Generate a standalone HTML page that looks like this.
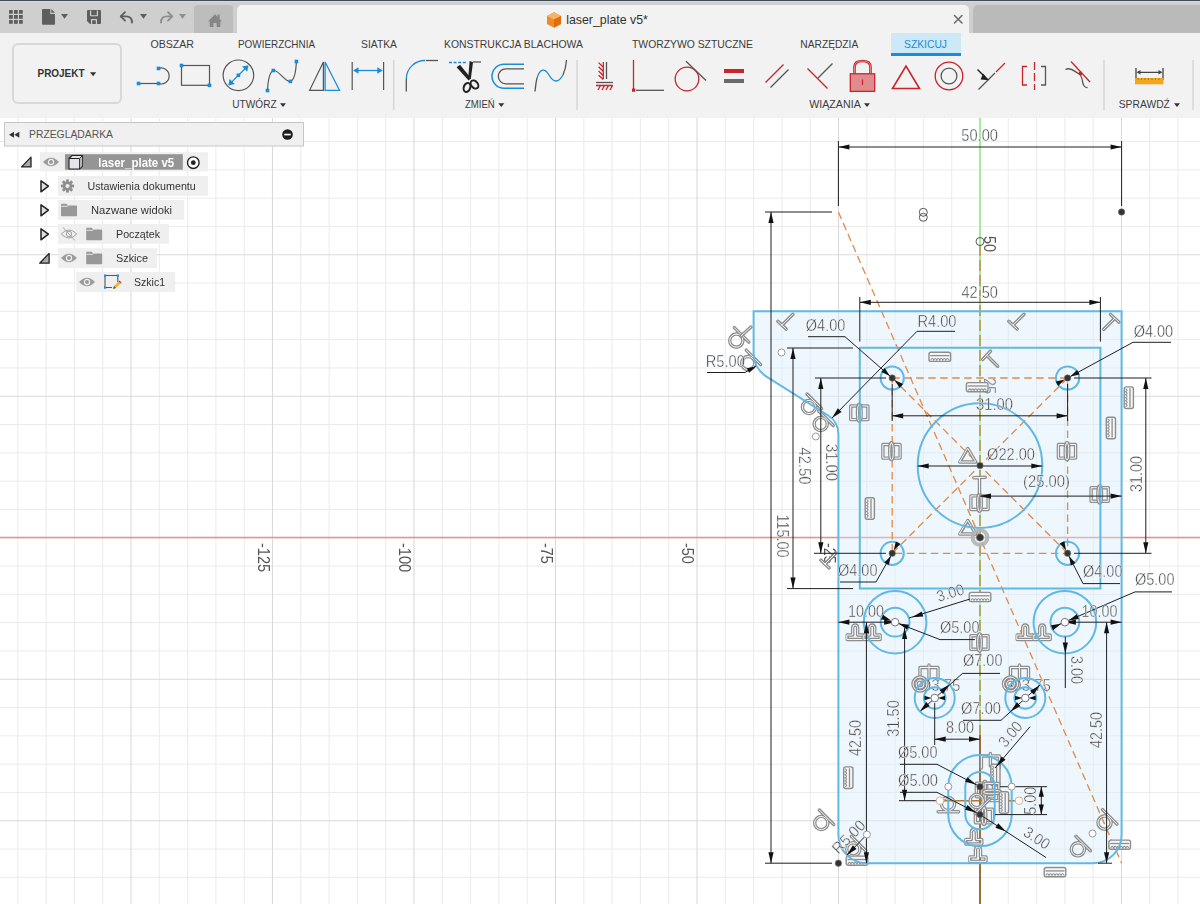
<!DOCTYPE html>
<html><head><meta charset="utf-8">
<style>
*{margin:0;padding:0;box-sizing:border-box}
html,body{width:1200px;height:904px;overflow:hidden;background:#fff;font-family:"Liberation Sans",sans-serif;position:relative}
.abs{position:absolute}
.tab{position:absolute;top:37px;font-size:10.4px;line-height:14px;color:#3c3c3c;white-space:nowrap}
.glabel{position:absolute;top:97px;font-size:10.4px;line-height:14px;color:#3c3c3c;white-space:nowrap}
.bt{position:absolute;font-size:11.5px;line-height:14px;color:#333;white-space:nowrap}
.rowbg{position:absolute;background:#ececec}
</style></head><body>
<div class="abs" style="left:0;top:0;width:1200px;height:118px;background:#f2f2f2"></div>
<div class="abs" style="left:0;top:0;width:1200px;height:33px;background:#cfcfcf"></div>
<div class="abs" style="left:0;top:0;width:1200px;height:1px;background:#3f4a5c"></div>
<div class="abs" style="left:0;top:1px;width:1200px;height:1px;background:#d9d9d9"></div>
<div class="abs" style="left:194px;top:5px;width:39px;height:28px;background:#bdbdbd;border-radius:4px 4px 0 0"></div>
<div class="abs" style="left:237px;top:5px;width:732px;height:28px;background:#f2f2f2;border-radius:5px 5px 0 0"></div>
<div class="abs" style="left:973px;top:5px;width:227px;height:28px;background:#bababa;border-radius:5px 0 0 0"></div>
<div class="abs" style="left:11.5px;top:43px;width:110px;height:61px;border:2px solid #d8d8d8;border-radius:6px"></div>
<div class="abs" style="left:891px;top:33px;width:70px;height:23px;background:#cde8f7;border-bottom:3px solid #1a8cd8"></div>
<svg class="abs" style="left:0;top:0" width="1200" height="118" viewBox="0 0 1200 118">
<g fill="#5e5e5e">
<rect x="9" y="10" width="3.8" height="3.8" rx="0.6"/><rect x="14" y="10" width="3.8" height="3.8"/><rect x="19" y="10" width="3.8" height="3.8" rx="0.6"/>
<rect x="9" y="15" width="3.8" height="3.8"/><rect x="14" y="15" width="3.8" height="3.8"/><rect x="19" y="15" width="3.8" height="3.8"/>
<rect x="9" y="20" width="3.8" height="3.8" rx="0.6"/><rect x="14" y="20" width="3.8" height="3.8"/><rect x="19" y="20" width="3.8" height="3.8" rx="0.6"/>
<path d="M42 9.8Q42 9 42.8 9H50.3V14H55V24Q55 24.8 54.2 24.8H42.8Q42 24.8 42 24Z"/>
<path d="M51.3 9L55 12.8H51.3Z"/>
<path d="M61 14H68L64.5 18.8Z"/>
<path d="M87 11Q87 10 88 10H100Q101 10 101 11V23Q101 24 100 24H90L87 21Z M90 10.6V15.5Q90 16.3 90.8 16.3H97.2Q98 16.3 98 15.5V10.6H96.8V15.2H91.2V10.6Z M91 24V19.8Q91 19 91.8 19H96.2Q97 19 97 19.8V24H95.8V20.2H92.2V24Z" fill-rule="evenodd"/>
<path d="M140 14H147L143.5 18.8Z"/>
</g>
<g fill="none" stroke="#5e5e5e" stroke-width="1.9" stroke-linecap="round" stroke-linejoin="round">
<path d="M125 12.2L120.8 16.4L125 20.6"/><path d="M121 16.4H126Q132 16.4 132 22.6"/>
</g>
<g fill="none" stroke="#8e8e8e" stroke-width="1.9" stroke-linecap="round" stroke-linejoin="round">
<path d="M168 12.2L172.2 16.4L168 20.6"/><path d="M172 16.4H167Q161 16.4 161 22.6"/>
</g>
<path d="M179 14H186L182.5 18.8Z" fill="#8e8e8e"/>
<path d="M208 21.3L215 14.3L217.6 16.9V14.6H219.6V18.9L222 21.3H220.3V27H216.6V23H213.4V27H209.7V21.3Z" fill="#868686"/>
<g stroke="#6a6a6a" stroke-width="1.5" stroke-linecap="round"><path d="M954.5 15.5L962 23M962 15.5L954.5 23"/></g>
<!-- cube icon title -->
<g transform="translate(546,12)">
<path d="M8 0.3L15 3.9V12L8 15.7L1 12V3.9Z" fill="#f08a24"/>
<path d="M8 0.3L15 3.9L8 7.6L1 3.9Z" fill="#f7b26a"/>
<path d="M8 7.6L15 3.9V12L8 15.7Z" fill="#e06d10"/>
</g>
<text x="566.2" y="24" font-size="12.6" fill="#333" textLength="81.7" lengthAdjust="spacingAndGlyphs">laser_plate v5*</text>
<g font-size="10.4" fill="#3c3c3c">
<text x="150.4" y="48" textLength="43.6" lengthAdjust="spacingAndGlyphs">OBSZAR</text>
<text x="238" y="48" textLength="77" lengthAdjust="spacingAndGlyphs">POWIERZCHNIA</text>
<text x="361" y="48" textLength="36" lengthAdjust="spacingAndGlyphs">SIATKA</text>
<text x="444" y="48" textLength="139" lengthAdjust="spacingAndGlyphs">KONSTRUKCJA BLACHOWA</text>
<text x="632" y="48" textLength="121" lengthAdjust="spacingAndGlyphs">TWORZYWO SZTUCZNE</text>
<text x="800.3" y="48" textLength="58" lengthAdjust="spacingAndGlyphs">NARZĘDZIA</text>
<text x="904" y="48" fill="#1a8cd8" textLength="43" lengthAdjust="spacingAndGlyphs">SZKICUJ</text>
<text x="232.3" y="108" textLength="44.3" lengthAdjust="spacingAndGlyphs">UTWÓRZ</text>
<text x="465" y="108" textLength="29.7" lengthAdjust="spacingAndGlyphs">ZMIEŃ</text>
<text x="809.2" y="108" textLength="51.6" lengthAdjust="spacingAndGlyphs">WIĄZANIA</text>
<text x="1118.7" y="108" textLength="51.2" lengthAdjust="spacingAndGlyphs">SPRAWDŹ</text>
</g>
<text x="37.5" y="77" font-size="10.8" font-weight="bold" fill="#333" textLength="47" lengthAdjust="spacingAndGlyphs">PROJEKT</text>
<g fill="#333"><path d="M90 72.3H96.2L93.1 76.3Z"/><path d="M280 103.3H286L283 107Z"/><path d="M498.3 103.3H504.3L501.3 107Z"/><path d="M864 103.3H870L867 107Z"/><path d="M1174 103.3H1180L1177 107Z"/></g>
<!-- separators -->
<g stroke="#d6d6d6" stroke-width="1.5"><path d="M393.7 60V110M577 60V110M1104 60V110M1193 60V110"/></g>
<!-- UTWORZ icons -->
<g fill="none" stroke="#555" stroke-width="1.2">
<path d="M138.5 83.5H158.5"/><path d="M158.5 68.4A8 8 0 1 1 158.5 83.5"/>
<rect x="181.5" y="65.5" width="28" height="19.8"/>
<circle cx="238.4" cy="75.3" r="15.3"/>
<path d="M267.5 90.5C268 80 270 72 273.3 70.5C279 70 285 82 290.4 81.4C295 80 296 70 296.4 61.5"/>
<path d="M323.4 62V90.3H309.6Z"/>
<path d="M352.2 62V90M383.6 62V90"/>
</g>
<g fill="#1a8cd8">
<rect x="136.7" y="81.7" width="3.6" height="3.6"/><rect x="156.7" y="81.7" width="3.6" height="3.6"/><rect x="156.7" y="66.6" width="3.6" height="3.6"/>
<rect x="179.7" y="63.7" width="3.6" height="3.6"/><rect x="207.7" y="83.5" width="3.6" height="3.6"/>
<rect x="236.6" y="73.5" width="3.6" height="3.6"/>
<rect x="265.7" y="88.7" width="3.6" height="3.6"/><rect x="271.5" y="68.7" width="3.6" height="3.6"/><rect x="288.6" y="79.6" width="3.6" height="3.6"/><rect x="294.6" y="59.7" width="3.6" height="3.6"/>
<path d="M248.5 65.2L242 66.5L247.2 71.7Z"/><path d="M228.3 85.4L234.8 84.1L229.6 78.9Z"/>
<path d="M353 70.5L358.5 67.2V73.8Z"/><path d="M382.8 70.5L377.3 67.2V73.8Z"/>
</g>
<g fill="none" stroke="#1a8cd8" stroke-width="1.3">
<path d="M245 68.7L231.8 81.9"/>
<path d="M325.1 62V90.3H339.5Z"/>
<path d="M357 70.5H379"/>
</g>
<!-- ZMIEN icons -->
<g fill="none" stroke-width="1.3">
<path d="M406.3 79V91.5" stroke="#555"/>
<path d="M406.3 79A18.5 18.5 0 0 1 425 60.5" stroke="#1a8cd8"/>
<path d="M426 60.5H438" stroke="#555"/>
<path d="M449 62.5H466" stroke="#1a8cd8" stroke-dasharray="3 1.6"/>
<path d="M473 62H481" stroke="#555"/>
<path d="M524 64.3H504A12 12 0 0 0 504 88.3H524" stroke="#1a8cd8" stroke-width="1.5"/>
<path d="M524 68.8H505.8A7.5 7.5 0 0 0 505.8 83.8H524" stroke="#555"/>
<path d="M535 91.5Q536 82 537 78" stroke="#555"/>
<path d="M537 78C540 68 545 68 549 75C553 82 558 84 563 75" stroke="#1a8cd8"/>
<path d="M563 75Q566 68 566.5 60" stroke="#555"/>
</g>
<g fill="#222">
<path d="M456.6 67.2L460 64.8L471 78.2L468.6 80.6Z"/>
<path d="M469.6 61L473 62.2L470.8 79L468.2 78.4Z"/>
<ellipse cx="467" cy="87.5" rx="3.2" ry="4.6" fill="none" stroke="#222" stroke-width="2" transform="rotate(20 467 87.5)"/>
<ellipse cx="474.5" cy="84.5" rx="3.2" ry="4.6" fill="none" stroke="#222" stroke-width="2" transform="rotate(-40 474.5 84.5)"/>
</g>
<!-- WIAZANIA icons -->
<g fill="none" stroke-width="1.3">
<path d="M606.5 62V79" stroke="#555"/>
<path d="M603.3 62V79M598.6 62.6L603.3 67.3M598.6 66.8L603.3 71.5M598.6 71L603.3 75.7M598.6 75.2L603.3 79.4" stroke="#c8242a"/>
<path d="M596 82.5H613" stroke="#555"/>
<path d="M596 85.5H613M598 90L600.5 85.5M602 90L604.5 85.5M606 90L608.5 85.5M610 90L612.5 85.5" stroke="#c8242a"/>
<path d="M633.5 60V89" stroke="#c8242a"/>
<path d="M636 90.3H664" stroke="#555"/>
<circle cx="687" cy="79" r="11.8" stroke="#c8242a"/>
<path d="M686 61.2L706 80.5" stroke="#555"/>
<path d="M765.5 82.5L783.5 64.5M807.5 68.5L827.5 88.5" stroke="#c8242a"/>
<path d="M770.5 87.5L788.5 69.5M818 78L832.5 63.5" stroke="#555"/>
<path d="M892.5 88.5H919.5L906 66Z" stroke="#c8242a" stroke-width="1.6"/>
<circle cx="949" cy="76" r="13.8" stroke="#c8242a"/>
<circle cx="949" cy="76" r="7.9" stroke="#555"/>
<path d="M978.5 89.5L995 73" stroke="#555"/>
<path d="M996 72L1005 63" stroke="#c8242a"/>
<path d="M977.5 69.5L984.5 76.5" stroke="#222" stroke-width="1.4"/>
<path d="M1027 66.5H1022.5V85H1027" stroke="#c8242a"/>
<path d="M1041 66.5H1045.5V85H1041" stroke="#555"/>
<path d="M1034.5 62V90" stroke="#c8242a" stroke-dasharray="8 3"/>
<path d="M1071 61.5L1090 82" stroke="#c8242a"/>
<path d="M1065.5 69.5C1071 66.5 1075 72 1078.5 73.5C1083 76 1082 82 1083.5 85Q1085 88 1087.5 87.5" stroke="#555"/>
<path d="M1136 68V80M1163 68V80M1138 72.3H1161" stroke="#444"/>
</g>
<g fill="#c8242a">
<rect x="632" y="88.5" width="3.3" height="3.3"/>
<rect x="724" y="69" width="20" height="4"/>
<rect x="1078.8" y="71.8" width="3.2" height="3.2"/>
</g>
<rect x="724" y="79" width="20" height="4" fill="#6a6a6a"/>
<g>
<path d="M854.5 73.5V67Q854.5 61 862.5 61Q870.5 61 870.5 67V73.5" fill="none" stroke="#c8242a" stroke-width="2.6"/>
<path d="M854.5 73.5V67Q854.5 61 862.5 61Q870.5 61 870.5 67V73.5" fill="none" stroke="#e08c8f" stroke-width="0.9"/>
<rect x="850.3" y="73.8" width="24.4" height="17.6" fill="#e08c8f" stroke="#c8242a" stroke-width="1.3"/>
<path d="M862.5 79.5V85" stroke="#c8242a" stroke-width="1.2"/>
</g>
<path d="M983 73.6L989.2 80.2L980.6 79.6Z" fill="#222"/>
<g fill="#444"><path d="M1136.5 72.3L1140.5 70V74.6Z"/><path d="M1162.5 72.3L1158.5 70V74.6Z"/></g>
<rect x="1135" y="78" width="28.5" height="6.3" fill="#f3a81c"/>
<path d="M1138 78V80M1141.5 78V80M1145 78V80M1148.5 78V80M1152 78V80M1155.5 78V80M1159 78V80" stroke="#a06a00" stroke-width="0.8"/>
</svg>
<svg class="abs" style="left:0;top:118px;will-change:transform" width="1200" height="786" viewBox="0 118 1200 786" shape-rendering="geometricPrecision">
<path d="M17.80 118V904M46.10 118V904M74.40 118V904M102.70 118V904M159.30 118V904M187.60 118V904M215.90 118V904M244.20 118V904M300.80 118V904M329.10 118V904M357.40 118V904M385.70 118V904M442.30 118V904M470.60 118V904M498.90 118V904M527.20 118V904M583.80 118V904M612.10 118V904M640.40 118V904M668.70 118V904M725.30 118V904M753.60 118V904M781.90 118V904M810.20 118V904M866.80 118V904M895.10 118V904M923.40 118V904M951.70 118V904M1008.30 118V904M1036.60 118V904M1064.90 118V904M1093.20 118V904M1149.80 118V904M1178.10 118V904M0 141.55H1200M0 169.85H1200M0 198.15H1200M0 226.45H1200M0 283.05H1200M0 311.35H1200M0 339.65H1200M0 367.95H1200M0 424.55H1200M0 452.85H1200M0 481.15H1200M0 509.45H1200M0 566.05H1200M0 594.35H1200M0 622.65H1200M0 650.95H1200M0 707.55H1200M0 735.85H1200M0 764.15H1200M0 792.45H1200M0 849.05H1200M0 877.35H1200" stroke="#ebebeb" stroke-width="1" fill="none"/>
<path d="M131.00 118V904M272.50 118V904M414.00 118V904M555.50 118V904M697.00 118V904M838.50 118V904M980.00 118V904M1121.50 118V904M0 254.75H1200M0 396.25H1200M0 537.75H1200M0 679.25H1200M0 820.75H1200" stroke="#dadada" stroke-width="1.1" fill="none"/>
<path d="M0 537.5H1200" stroke="#f08c8c" stroke-width="1.3"/>
<path d="M980 118V904" stroke="#a4eca4" stroke-width="2"/>
<text transform="translate(257.7 543) rotate(90)" font-size="16" fill="#555" textLength="29.2" lengthAdjust="spacingAndGlyphs">-125</text>
<text transform="translate(399.0 543) rotate(90)" font-size="16" fill="#555" textLength="29.2" lengthAdjust="spacingAndGlyphs">-100</text>
<text transform="translate(540.5 543) rotate(90)" font-size="16" fill="#555" textLength="20.8" lengthAdjust="spacingAndGlyphs">-75</text>
<text transform="translate(682.0 543) rotate(90)" font-size="16" fill="#555" textLength="20.8" lengthAdjust="spacingAndGlyphs">-50</text>
<text transform="translate(823.5 543) rotate(90)" font-size="16" fill="#555" textLength="20.8" lengthAdjust="spacingAndGlyphs">-25</text>
<text transform="translate(984 236) rotate(90)" font-size="16" fill="#555" textLength="16" lengthAdjust="spacingAndGlyphs">50</text>
<text transform="translate(984 378) rotate(90)" font-size="16" fill="#555" textLength="16" lengthAdjust="spacingAndGlyphs">25</text>
<path d="M753.6 311.3H1121.6V834.90A28.30 28.30 0 0 1 1093.30 863.2H866.70A28.30 28.30 0 0 1 838.4 834.90V434.40A22.64 22.64 0 0 0 827.82 415.24L766.82 376.82A28.30 28.30 0 0 1 753.6 352.88Z" fill="#d6ebfa" fill-opacity="0.42" stroke="none"/>
<path d="M838.40 212.00L1121.60 863.20" stroke="#e08a48" stroke-width="1.30" fill="none" stroke-dasharray="7.5 4.5"/>
<path d="M892.2 378H1067.6V553.3H892.2Z" stroke="#e08a48" stroke-width="1.3" fill="none" stroke-dasharray="7.5 4.5"/>
<path d="M892.20 378.00L1067.60 553.30" stroke="#e08a48" stroke-width="1.30" fill="none" stroke-dasharray="7.5 4.5"/>
<path d="M1067.60 378.00L892.20 553.30" stroke="#e08a48" stroke-width="1.30" fill="none" stroke-dasharray="7.5 4.5"/>
<path d="M980 245V735" stroke="#b4aa5c" stroke-width="2" fill="none" stroke-dasharray="11 4"/><path d="M980 735V904" stroke="#9a6e34" stroke-width="2" fill="none"/>
<path d="M940.00 800.70L1019.00 800.70" stroke="#b8742e" stroke-width="1.60" fill="none" />
<text x="919.50" y="690.50" font-size="15.7" fill="#555" stroke="#f6f9fc" stroke-width="0.4" text-anchor="start" textLength="41.0" lengthAdjust="spacingAndGlyphs">Ø3.75</text>
<text x="1010.00" y="690.50" font-size="15.7" fill="#555" stroke="#f6f9fc" stroke-width="0.4" text-anchor="start" textLength="41.0" lengthAdjust="spacingAndGlyphs">Ø3.75</text>
<g transform="translate(736.3 340.6) rotate(0)"><path d="M0 -6.6A6.6 6.6 0 1 1 0 6.6A6.6 6.6 0 1 1 0 -6.6M-2 -13L12.5 1.5" fill="none" stroke="#8d8d8d" stroke-width="3.4" stroke-linejoin="round" stroke-linecap="round" /><path d="M0 -6.6A6.6 6.6 0 1 1 0 6.6A6.6 6.6 0 1 1 0 -6.6M-2 -13L12.5 1.5" fill="none" stroke="#f7f9fb" stroke-width="1" stroke-linejoin="round" stroke-linecap="round"/></g>
<g transform="translate(743 335)"><path d="M-2 1L8 -8" fill="none" stroke="#8d8d8d" stroke-width="3.4" stroke-linejoin="round" stroke-linecap="round" /><path d="M-2 1L8 -8" fill="none" stroke="#f7f9fb" stroke-width="1" stroke-linejoin="round" stroke-linecap="round"/></g>
<g transform="translate(748.2 363.1) rotate(0)"><path d="M0 -6.6A6.6 6.6 0 1 1 0 6.6A6.6 6.6 0 1 1 0 -6.6M-2 -13L12.5 1.5" fill="none" stroke="#8d8d8d" stroke-width="3.4" stroke-linejoin="round" stroke-linecap="round" /><path d="M0 -6.6A6.6 6.6 0 1 1 0 6.6A6.6 6.6 0 1 1 0 -6.6M-2 -13L12.5 1.5" fill="none" stroke="#f7f9fb" stroke-width="1" stroke-linejoin="round" stroke-linecap="round"/></g>
<g transform="translate(782.0 325.2) rotate(0)"><path d="M-4.2 -3.9L4.2 3.9M0 0L11 -11" fill="none" stroke="#8d8d8d" stroke-width="3.4" stroke-linejoin="round" stroke-linecap="round" /><path d="M-4.2 -3.9L4.2 3.9M0 0L11 -11" fill="none" stroke="#f7f9fb" stroke-width="1" stroke-linejoin="round" stroke-linecap="round"/></g>
<g transform="translate(1013.0 325.2) rotate(0)"><path d="M-4.2 -3.9L4.2 3.9M0 0L11 -11" fill="none" stroke="#8d8d8d" stroke-width="3.4" stroke-linejoin="round" stroke-linecap="round" /><path d="M-4.2 -3.9L4.2 3.9M0 0L11 -11" fill="none" stroke="#f7f9fb" stroke-width="1" stroke-linejoin="round" stroke-linecap="round"/></g>
<g transform="translate(1114.8 318.3) rotate(180)"><path d="M-4.2 -3.9L4.2 3.9M0 0L11 -11" fill="none" stroke="#8d8d8d" stroke-width="3.4" stroke-linejoin="round" stroke-linecap="round" /><path d="M-4.2 -3.9L4.2 3.9M0 0L11 -11" fill="none" stroke="#f7f9fb" stroke-width="1" stroke-linejoin="round" stroke-linecap="round"/></g>
<g transform="translate(986.7 355.2) rotate(90)"><path d="M-4.2 -3.9L4.2 3.9M0 0L11 -11" fill="none" stroke="#8d8d8d" stroke-width="3.4" stroke-linejoin="round" stroke-linecap="round" /><path d="M-4.2 -3.9L4.2 3.9M0 0L11 -11" fill="none" stroke="#f7f9fb" stroke-width="1" stroke-linejoin="round" stroke-linecap="round"/></g>
<g transform="translate(809.0 407.0) rotate(0)"><path d="M0 -6.6A6.6 6.6 0 1 1 0 6.6A6.6 6.6 0 1 1 0 -6.6M-2 -13L12.5 1.5" fill="none" stroke="#8d8d8d" stroke-width="3.4" stroke-linejoin="round" stroke-linecap="round" /><path d="M0 -6.6A6.6 6.6 0 1 1 0 6.6A6.6 6.6 0 1 1 0 -6.6M-2 -13L12.5 1.5" fill="none" stroke="#f7f9fb" stroke-width="1" stroke-linejoin="round" stroke-linecap="round"/></g>
<g transform="translate(820.7 424.0) rotate(0)"><path d="M0 -6.6A6.6 6.6 0 1 1 0 6.6A6.6 6.6 0 1 1 0 -6.6M-2 -13L12.5 1.5" fill="none" stroke="#8d8d8d" stroke-width="3.4" stroke-linejoin="round" stroke-linecap="round" /><path d="M0 -6.6A6.6 6.6 0 1 1 0 6.6A6.6 6.6 0 1 1 0 -6.6M-2 -13L12.5 1.5" fill="none" stroke="#f7f9fb" stroke-width="1" stroke-linejoin="round" stroke-linecap="round"/></g>
<g transform="translate(939.8 356.8) rotate(0)"><rect x="-10.8" y="-4.6" width="21.6" height="9.2" rx="2" fill="#f5f7f9" stroke="#8d8d8d" stroke-width="1.4"/><path d="M-9.5 -1.2H9.5" stroke="#8d8d8d" stroke-width="1.3"/><path d="M-9 3.2Q-7.5 0.2 -6 3.2Q-4.5 0.2 -3 3.2Q-1.5 0.2 0 3.2Q1.5 0.2 3 3.2Q4.5 0.2 6 3.2Q7.5 0.2 9 3.2" fill="none" stroke="#8d8d8d" stroke-width="1.1"/></g>
<g transform="translate(977.2 387.2) rotate(0)"><rect x="-10.8" y="-4.6" width="21.6" height="9.2" rx="2" fill="#f5f7f9" stroke="#8d8d8d" stroke-width="1.4"/><path d="M-9.5 -1.2H9.5" stroke="#8d8d8d" stroke-width="1.3"/><path d="M-9 3.2Q-7.5 0.2 -6 3.2Q-4.5 0.2 -3 3.2Q-1.5 0.2 0 3.2Q1.5 0.2 3 3.2Q4.5 0.2 6 3.2Q7.5 0.2 9 3.2" fill="none" stroke="#8d8d8d" stroke-width="1.1"/></g>
<g transform="translate(859.3 412.8) rotate(0)"><path d="M-3 -6.8H-8.6V6.8H-3M3 -6.8H8.6V6.8H3" fill="none" stroke="#8d8d8d" stroke-width="3.4" stroke-linejoin="round" stroke-linecap="round" /><path d="M-3 -6.8H-8.6V6.8H-3M3 -6.8H8.6V6.8H3" fill="none" stroke="#f7f9fb" stroke-width="1" stroke-linejoin="round" stroke-linecap="round"/></g>
<g transform="translate(859.3 412.8) rotate(0)"><path d="M0 -8.5Q1.8 -8.5 1.8 0Q1.8 8.5 0 8.5Q-1.8 8.5 -1.8 0Q-1.8 -8.5 0 -8.5Z" fill="none" stroke="#8d8d8d" stroke-width="3.4" stroke-linejoin="round" stroke-linecap="round" /><path d="M0 -8.5Q1.8 -8.5 1.8 0Q1.8 8.5 0 8.5Q-1.8 8.5 -1.8 0Q-1.8 -8.5 0 -8.5Z" fill="none" stroke="#f7f9fb" stroke-width="1" stroke-linejoin="round" stroke-linecap="round"/></g>
<g transform="translate(891.5 451.3) rotate(0)"><path d="M-3 -6.8H-8.6V6.8H-3M3 -6.8H8.6V6.8H3" fill="none" stroke="#8d8d8d" stroke-width="3.4" stroke-linejoin="round" stroke-linecap="round" /><path d="M-3 -6.8H-8.6V6.8H-3M3 -6.8H8.6V6.8H3" fill="none" stroke="#f7f9fb" stroke-width="1" stroke-linejoin="round" stroke-linecap="round"/></g>
<g transform="translate(891.5 451.3) rotate(0)"><path d="M0 -8.5Q1.8 -8.5 1.8 0Q1.8 8.5 0 8.5Q-1.8 8.5 -1.8 0Q-1.8 -8.5 0 -8.5Z" fill="none" stroke="#8d8d8d" stroke-width="3.4" stroke-linejoin="round" stroke-linecap="round" /><path d="M0 -8.5Q1.8 -8.5 1.8 0Q1.8 8.5 0 8.5Q-1.8 8.5 -1.8 0Q-1.8 -8.5 0 -8.5Z" fill="none" stroke="#f7f9fb" stroke-width="1" stroke-linejoin="round" stroke-linecap="round"/></g>
<g transform="translate(1067.0 451.3) rotate(0)"><path d="M-3 -6.8H-8.6V6.8H-3M3 -6.8H8.6V6.8H3" fill="none" stroke="#8d8d8d" stroke-width="3.4" stroke-linejoin="round" stroke-linecap="round" /><path d="M-3 -6.8H-8.6V6.8H-3M3 -6.8H8.6V6.8H3" fill="none" stroke="#f7f9fb" stroke-width="1" stroke-linejoin="round" stroke-linecap="round"/></g>
<g transform="translate(1067.0 451.3) rotate(0)"><path d="M0 -8.5Q1.8 -8.5 1.8 0Q1.8 8.5 0 8.5Q-1.8 8.5 -1.8 0Q-1.8 -8.5 0 -8.5Z" fill="none" stroke="#8d8d8d" stroke-width="3.4" stroke-linejoin="round" stroke-linecap="round" /><path d="M0 -8.5Q1.8 -8.5 1.8 0Q1.8 8.5 0 8.5Q-1.8 8.5 -1.8 0Q-1.8 -8.5 0 -8.5Z" fill="none" stroke="#f7f9fb" stroke-width="1" stroke-linejoin="round" stroke-linecap="round"/></g>
<g transform="translate(979.5 502.7) rotate(0)"><path d="M-3 -6.8H-8.6V6.8H-3M3 -6.8H8.6V6.8H3" fill="none" stroke="#8d8d8d" stroke-width="3.4" stroke-linejoin="round" stroke-linecap="round" /><path d="M-3 -6.8H-8.6V6.8H-3M3 -6.8H8.6V6.8H3" fill="none" stroke="#f7f9fb" stroke-width="1" stroke-linejoin="round" stroke-linecap="round"/></g>
<g transform="translate(979.5 502.7) rotate(0)"><path d="M0 -8.5Q1.8 -8.5 1.8 0Q1.8 8.5 0 8.5Q-1.8 8.5 -1.8 0Q-1.8 -8.5 0 -8.5Z" fill="none" stroke="#8d8d8d" stroke-width="3.4" stroke-linejoin="round" stroke-linecap="round" /><path d="M0 -8.5Q1.8 -8.5 1.8 0Q1.8 8.5 0 8.5Q-1.8 8.5 -1.8 0Q-1.8 -8.5 0 -8.5Z" fill="none" stroke="#f7f9fb" stroke-width="1" stroke-linejoin="round" stroke-linecap="round"/></g>
<g transform="translate(1099.7 494.5) rotate(0)"><path d="M-3 -6.8H-8.6V6.8H-3M3 -6.8H8.6V6.8H3" fill="none" stroke="#8d8d8d" stroke-width="3.4" stroke-linejoin="round" stroke-linecap="round" /><path d="M-3 -6.8H-8.6V6.8H-3M3 -6.8H8.6V6.8H3" fill="none" stroke="#f7f9fb" stroke-width="1" stroke-linejoin="round" stroke-linecap="round"/></g>
<g transform="translate(1099.7 494.5) rotate(0)"><path d="M0 -8.5Q1.8 -8.5 1.8 0Q1.8 8.5 0 8.5Q-1.8 8.5 -1.8 0Q-1.8 -8.5 0 -8.5Z" fill="none" stroke="#8d8d8d" stroke-width="3.4" stroke-linejoin="round" stroke-linecap="round" /><path d="M0 -8.5Q1.8 -8.5 1.8 0Q1.8 8.5 0 8.5Q-1.8 8.5 -1.8 0Q-1.8 -8.5 0 -8.5Z" fill="none" stroke="#f7f9fb" stroke-width="1" stroke-linejoin="round" stroke-linecap="round"/></g>
<g transform="translate(1110.9 428.0) rotate(90)"><rect x="-10.8" y="-4.6" width="21.6" height="9.2" rx="2" fill="#f5f7f9" stroke="#8d8d8d" stroke-width="1.4"/><path d="M-9.5 -1.2H9.5" stroke="#8d8d8d" stroke-width="1.3"/><path d="M-9 3.2Q-7.5 0.2 -6 3.2Q-4.5 0.2 -3 3.2Q-1.5 0.2 0 3.2Q1.5 0.2 3 3.2Q4.5 0.2 6 3.2Q7.5 0.2 9 3.2" fill="none" stroke="#8d8d8d" stroke-width="1.1"/></g>
<g transform="translate(1128.8 397.7) rotate(90)"><rect x="-10.8" y="-4.6" width="21.6" height="9.2" rx="2" fill="#f5f7f9" stroke="#8d8d8d" stroke-width="1.4"/><path d="M-9.5 -1.2H9.5" stroke="#8d8d8d" stroke-width="1.3"/><path d="M-9 3.2Q-7.5 0.2 -6 3.2Q-4.5 0.2 -3 3.2Q-1.5 0.2 0 3.2Q1.5 0.2 3 3.2Q4.5 0.2 6 3.2Q7.5 0.2 9 3.2" fill="none" stroke="#8d8d8d" stroke-width="1.1"/></g>
<g transform="translate(869.8 508.5) rotate(90)"><rect x="-10.8" y="-4.6" width="21.6" height="9.2" rx="2" fill="#f5f7f9" stroke="#8d8d8d" stroke-width="1.4"/><path d="M-9.5 -1.2H9.5" stroke="#8d8d8d" stroke-width="1.3"/><path d="M-9 3.2Q-7.5 0.2 -6 3.2Q-4.5 0.2 -3 3.2Q-1.5 0.2 0 3.2Q1.5 0.2 3 3.2Q4.5 0.2 6 3.2Q7.5 0.2 9 3.2" fill="none" stroke="#8d8d8d" stroke-width="1.1"/></g>
<g transform="translate(967.8 455.5)"><path d="M-8 6.5H8L0 -7Z" fill="none" stroke="#8d8d8d" stroke-width="3.4" stroke-linejoin="round" stroke-linecap="round" /><path d="M-8 6.5H8L0 -7Z" fill="none" stroke="#f7f9fb" stroke-width="1" stroke-linejoin="round" stroke-linecap="round"/></g>
<g transform="translate(967.8 527.5)"><path d="M-8 6.5H8L0 -7Z" fill="none" stroke="#8d8d8d" stroke-width="3.4" stroke-linejoin="round" stroke-linecap="round" /><path d="M-8 6.5H8L0 -7Z" fill="none" stroke="#f7f9fb" stroke-width="1" stroke-linejoin="round" stroke-linecap="round"/></g>
<g transform="translate(979.5 477.5) rotate(135)"><path d="M-4.2 -3.9L4.2 3.9M0 0L11 -11" fill="none" stroke="#8d8d8d" stroke-width="3.4" stroke-linejoin="round" stroke-linecap="round" /><path d="M-4.2 -3.9L4.2 3.9M0 0L11 -11" fill="none" stroke="#f7f9fb" stroke-width="1" stroke-linejoin="round" stroke-linecap="round"/></g>
<g transform="translate(825.0 564.0) rotate(0)"><path d="M-4.2 -3.9L4.2 3.9M0 0L11 -11" fill="none" stroke="#8d8d8d" stroke-width="3.4" stroke-linejoin="round" stroke-linecap="round" /><path d="M-4.2 -3.9L4.2 3.9M0 0L11 -11" fill="none" stroke="#f7f9fb" stroke-width="1" stroke-linejoin="round" stroke-linecap="round"/></g>
<g transform="translate(980.0 597.0) rotate(0)"><rect x="-10.8" y="-4.6" width="21.6" height="9.2" rx="2" fill="#f5f7f9" stroke="#8d8d8d" stroke-width="1.4"/><path d="M-9.5 -1.2H9.5" stroke="#8d8d8d" stroke-width="1.3"/><path d="M-9 3.2Q-7.5 0.2 -6 3.2Q-4.5 0.2 -3 3.2Q-1.5 0.2 0 3.2Q1.5 0.2 3 3.2Q4.5 0.2 6 3.2Q7.5 0.2 9 3.2" fill="none" stroke="#8d8d8d" stroke-width="1.1"/></g>
<g transform="translate(855.2 632.5)"><path d="M-8 7H8V2.5H2.5V-4.5Q2.5 -7.5 0 -7.5Q-2.5 -7.5 -2.5 -4.5V2.5H-8Z" fill="none" stroke="#8d8d8d" stroke-width="3.4" stroke-linejoin="round" stroke-linecap="round" /><path d="M-8 7H8V2.5H2.5V-4.5Q2.5 -7.5 0 -7.5Q-2.5 -7.5 -2.5 -4.5V2.5H-8Z" fill="none" stroke="#f7f9fb" stroke-width="1" stroke-linejoin="round" stroke-linecap="round"/></g>
<g transform="translate(872.2 632.5)"><path d="M-8 7H8V2.5H2.5V-4.5Q2.5 -7.5 0 -7.5Q-2.5 -7.5 -2.5 -4.5V2.5H-8Z" fill="none" stroke="#8d8d8d" stroke-width="3.4" stroke-linejoin="round" stroke-linecap="round" /><path d="M-8 7H8V2.5H2.5V-4.5Q2.5 -7.5 0 -7.5Q-2.5 -7.5 -2.5 -4.5V2.5H-8Z" fill="none" stroke="#f7f9fb" stroke-width="1" stroke-linejoin="round" stroke-linecap="round"/></g>
<g transform="translate(1025.2 632.5)"><path d="M-8 7H8V2.5H2.5V-4.5Q2.5 -7.5 0 -7.5Q-2.5 -7.5 -2.5 -4.5V2.5H-8Z" fill="none" stroke="#8d8d8d" stroke-width="3.4" stroke-linejoin="round" stroke-linecap="round" /><path d="M-8 7H8V2.5H2.5V-4.5Q2.5 -7.5 0 -7.5Q-2.5 -7.5 -2.5 -4.5V2.5H-8Z" fill="none" stroke="#f7f9fb" stroke-width="1" stroke-linejoin="round" stroke-linecap="round"/></g>
<g transform="translate(1042.2 632.5)"><path d="M-8 7H8V2.5H2.5V-4.5Q2.5 -7.5 0 -7.5Q-2.5 -7.5 -2.5 -4.5V2.5H-8Z" fill="none" stroke="#8d8d8d" stroke-width="3.4" stroke-linejoin="round" stroke-linecap="round" /><path d="M-8 7H8V2.5H2.5V-4.5Q2.5 -7.5 0 -7.5Q-2.5 -7.5 -2.5 -4.5V2.5H-8Z" fill="none" stroke="#f7f9fb" stroke-width="1" stroke-linejoin="round" stroke-linecap="round"/></g>
<g transform="translate(979.5 642.5) rotate(0)"><path d="M-3 -6.8H-8.6V6.8H-3M3 -6.8H8.6V6.8H3" fill="none" stroke="#8d8d8d" stroke-width="3.4" stroke-linejoin="round" stroke-linecap="round" /><path d="M-3 -6.8H-8.6V6.8H-3M3 -6.8H8.6V6.8H3" fill="none" stroke="#f7f9fb" stroke-width="1" stroke-linejoin="round" stroke-linecap="round"/></g>
<g transform="translate(979.5 642.5) rotate(0)"><path d="M0 -8.5Q1.8 -8.5 1.8 0Q1.8 8.5 0 8.5Q-1.8 8.5 -1.8 0Q-1.8 -8.5 0 -8.5Z" fill="none" stroke="#8d8d8d" stroke-width="3.4" stroke-linejoin="round" stroke-linecap="round" /><path d="M0 -8.5Q1.8 -8.5 1.8 0Q1.8 8.5 0 8.5Q-1.8 8.5 -1.8 0Q-1.8 -8.5 0 -8.5Z" fill="none" stroke="#f7f9fb" stroke-width="1" stroke-linejoin="round" stroke-linecap="round"/></g>
<g transform="translate(929.0 673.5)"><path d="M-9 6V-6H9V6 M0 -8.5V4" fill="none" stroke="#8d8d8d" stroke-width="3.4" stroke-linejoin="round" stroke-linecap="round" /><path d="M-9 6V-6H9V6 M0 -8.5V4" fill="none" stroke="#f7f9fb" stroke-width="1" stroke-linejoin="round" stroke-linecap="round"/></g>
<g transform="translate(1019.5 673.5)"><path d="M-9 6V-6H9V6 M0 -8.5V4" fill="none" stroke="#8d8d8d" stroke-width="3.4" stroke-linejoin="round" stroke-linecap="round" /><path d="M-9 6V-6H9V6 M0 -8.5V4" fill="none" stroke="#f7f9fb" stroke-width="1" stroke-linejoin="round" stroke-linecap="round"/></g>
<g transform="translate(920 684)"><path d="M0 -7A7 7 0 1 1 0 7A7 7 0 1 1 0 -7M0 -4A4 4 0 1 1 0 4A4 4 0 1 1 0 -4" fill="none" stroke="#8d8d8d" stroke-width="3.4" stroke-linejoin="round" stroke-linecap="round" /><path d="M0 -7A7 7 0 1 1 0 7A7 7 0 1 1 0 -7M0 -4A4 4 0 1 1 0 4A4 4 0 1 1 0 -4" fill="none" stroke="#f7f9fb" stroke-width="1" stroke-linejoin="round" stroke-linecap="round"/></g>
<g transform="translate(1010.5 684)"><path d="M0 -7A7 7 0 1 1 0 7A7 7 0 1 1 0 -7M0 -4A4 4 0 1 1 0 4A4 4 0 1 1 0 -4" fill="none" stroke="#8d8d8d" stroke-width="3.4" stroke-linejoin="round" stroke-linecap="round" /><path d="M0 -7A7 7 0 1 1 0 7A7 7 0 1 1 0 -7M0 -4A4 4 0 1 1 0 4A4 4 0 1 1 0 -4" fill="none" stroke="#f7f9fb" stroke-width="1" stroke-linejoin="round" stroke-linecap="round"/></g>
<g transform="translate(990.4 762.0)"><path d="M-9 6V-6H9V6 M0 -8.5V4" fill="none" stroke="#8d8d8d" stroke-width="3.4" stroke-linejoin="round" stroke-linecap="round" /><path d="M-9 6V-6H9V6 M0 -8.5V4" fill="none" stroke="#f7f9fb" stroke-width="1" stroke-linejoin="round" stroke-linecap="round"/></g>
<g transform="translate(995.4 775.0) rotate(90)"><rect x="-10.8" y="-4.6" width="21.6" height="9.2" rx="2" fill="#f5f7f9" stroke="#8d8d8d" stroke-width="1.4"/><path d="M-9.5 -1.2H9.5" stroke="#8d8d8d" stroke-width="1.3"/><path d="M-9 3.2Q-7.5 0.2 -6 3.2Q-4.5 0.2 -3 3.2Q-1.5 0.2 0 3.2Q1.5 0.2 3 3.2Q4.5 0.2 6 3.2Q7.5 0.2 9 3.2" fill="none" stroke="#8d8d8d" stroke-width="1.1"/></g>
<g transform="translate(985.0 790.0) rotate(0)"><path d="M-3 -6.8H-8.6V6.8H-3M3 -6.8H8.6V6.8H3" fill="none" stroke="#8d8d8d" stroke-width="3.4" stroke-linejoin="round" stroke-linecap="round" /><path d="M-3 -6.8H-8.6V6.8H-3M3 -6.8H8.6V6.8H3" fill="none" stroke="#f7f9fb" stroke-width="1" stroke-linejoin="round" stroke-linecap="round"/></g>
<g transform="translate(985.0 790.0) rotate(0)"><path d="M0 -8.5Q1.8 -8.5 1.8 0Q1.8 8.5 0 8.5Q-1.8 8.5 -1.8 0Q-1.8 -8.5 0 -8.5Z" fill="none" stroke="#8d8d8d" stroke-width="3.4" stroke-linejoin="round" stroke-linecap="round" /><path d="M0 -8.5Q1.8 -8.5 1.8 0Q1.8 8.5 0 8.5Q-1.8 8.5 -1.8 0Q-1.8 -8.5 0 -8.5Z" fill="none" stroke="#f7f9fb" stroke-width="1" stroke-linejoin="round" stroke-linecap="round"/></g>
<g transform="translate(992.0 792.0) rotate(90)"><path d="M-3 -6.8H-8.6V6.8H-3M3 -6.8H8.6V6.8H3" fill="none" stroke="#8d8d8d" stroke-width="3.4" stroke-linejoin="round" stroke-linecap="round" /><path d="M-3 -6.8H-8.6V6.8H-3M3 -6.8H8.6V6.8H3" fill="none" stroke="#f7f9fb" stroke-width="1" stroke-linejoin="round" stroke-linecap="round"/></g>
<g transform="translate(992.0 792.0) rotate(90)"><path d="M0 -8.5Q1.8 -8.5 1.8 0Q1.8 8.5 0 8.5Q-1.8 8.5 -1.8 0Q-1.8 -8.5 0 -8.5Z" fill="none" stroke="#8d8d8d" stroke-width="3.4" stroke-linejoin="round" stroke-linecap="round" /><path d="M0 -8.5Q1.8 -8.5 1.8 0Q1.8 8.5 0 8.5Q-1.8 8.5 -1.8 0Q-1.8 -8.5 0 -8.5Z" fill="none" stroke="#f7f9fb" stroke-width="1" stroke-linejoin="round" stroke-linecap="round"/></g>
<g transform="translate(984.0 816.0) rotate(0)"><path d="M-3 -6.8H-8.6V6.8H-3M3 -6.8H8.6V6.8H3" fill="none" stroke="#8d8d8d" stroke-width="3.4" stroke-linejoin="round" stroke-linecap="round" /><path d="M-3 -6.8H-8.6V6.8H-3M3 -6.8H8.6V6.8H3" fill="none" stroke="#f7f9fb" stroke-width="1" stroke-linejoin="round" stroke-linecap="round"/></g>
<g transform="translate(984.0 816.0) rotate(0)"><path d="M0 -8.5Q1.8 -8.5 1.8 0Q1.8 8.5 0 8.5Q-1.8 8.5 -1.8 0Q-1.8 -8.5 0 -8.5Z" fill="none" stroke="#8d8d8d" stroke-width="3.4" stroke-linejoin="round" stroke-linecap="round" /><path d="M0 -8.5Q1.8 -8.5 1.8 0Q1.8 8.5 0 8.5Q-1.8 8.5 -1.8 0Q-1.8 -8.5 0 -8.5Z" fill="none" stroke="#f7f9fb" stroke-width="1" stroke-linejoin="round" stroke-linecap="round"/></g>
<g transform="translate(976.7 801.0) rotate(90)"><path d="M0 -6.6A6.6 6.6 0 1 1 0 6.6A6.6 6.6 0 1 1 0 -6.6M-2 -13L12.5 1.5" fill="none" stroke="#8d8d8d" stroke-width="3.4" stroke-linejoin="round" stroke-linecap="round" /><path d="M0 -6.6A6.6 6.6 0 1 1 0 6.6A6.6 6.6 0 1 1 0 -6.6M-2 -13L12.5 1.5" fill="none" stroke="#f7f9fb" stroke-width="1" stroke-linejoin="round" stroke-linecap="round"/></g>
<g transform="translate(1004.0 802.5) rotate(90)"><rect x="-10.8" y="-4.6" width="21.6" height="9.2" rx="2" fill="#f5f7f9" stroke="#8d8d8d" stroke-width="1.4"/><path d="M-9.5 -1.2H9.5" stroke="#8d8d8d" stroke-width="1.3"/><path d="M-9 3.2Q-7.5 0.2 -6 3.2Q-4.5 0.2 -3 3.2Q-1.5 0.2 0 3.2Q1.5 0.2 3 3.2Q4.5 0.2 6 3.2Q7.5 0.2 9 3.2" fill="none" stroke="#8d8d8d" stroke-width="1.1"/></g>
<g transform="translate(948.0 804.0) rotate(135)"><path d="M0 -6.6A6.6 6.6 0 1 1 0 6.6A6.6 6.6 0 1 1 0 -6.6M-2 -13L12.5 1.5" fill="none" stroke="#8d8d8d" stroke-width="3.4" stroke-linejoin="round" stroke-linecap="round" /><path d="M0 -6.6A6.6 6.6 0 1 1 0 6.6A6.6 6.6 0 1 1 0 -6.6M-2 -13L12.5 1.5" fill="none" stroke="#f7f9fb" stroke-width="1" stroke-linejoin="round" stroke-linecap="round"/></g>
<g transform="translate(973.8 837.0)"><path d="M-8 7H8V2.5H2.5V-4.5Q2.5 -7.5 0 -7.5Q-2.5 -7.5 -2.5 -4.5V2.5H-8Z" fill="none" stroke="#8d8d8d" stroke-width="3.4" stroke-linejoin="round" stroke-linecap="round" /><path d="M-8 7H8V2.5H2.5V-4.5Q2.5 -7.5 0 -7.5Q-2.5 -7.5 -2.5 -4.5V2.5H-8Z" fill="none" stroke="#f7f9fb" stroke-width="1" stroke-linejoin="round" stroke-linecap="round"/></g>
<g transform="translate(978.0 854.4)"><path d="M-8 7H8V2.5H2.5V-4.5Q2.5 -7.5 0 -7.5Q-2.5 -7.5 -2.5 -4.5V2.5H-8Z" fill="none" stroke="#8d8d8d" stroke-width="3.4" stroke-linejoin="round" stroke-linecap="round" /><path d="M-8 7H8V2.5H2.5V-4.5Q2.5 -7.5 0 -7.5Q-2.5 -7.5 -2.5 -4.5V2.5H-8Z" fill="none" stroke="#f7f9fb" stroke-width="1" stroke-linejoin="round" stroke-linecap="round"/></g>
<g transform="translate(848.3 777.7) rotate(90)"><rect x="-10.8" y="-4.6" width="21.6" height="9.2" rx="2" fill="#f5f7f9" stroke="#8d8d8d" stroke-width="1.4"/><path d="M-9.5 -1.2H9.5" stroke="#8d8d8d" stroke-width="1.3"/><path d="M-9 3.2Q-7.5 0.2 -6 3.2Q-4.5 0.2 -3 3.2Q-1.5 0.2 0 3.2Q1.5 0.2 3 3.2Q4.5 0.2 6 3.2Q7.5 0.2 9 3.2" fill="none" stroke="#8d8d8d" stroke-width="1.1"/></g>
<g transform="translate(821.3 823.0) rotate(0)"><path d="M0 -6.6A6.6 6.6 0 1 1 0 6.6A6.6 6.6 0 1 1 0 -6.6M-2 -13L12.5 1.5" fill="none" stroke="#8d8d8d" stroke-width="3.4" stroke-linejoin="round" stroke-linecap="round" /><path d="M0 -6.6A6.6 6.6 0 1 1 0 6.6A6.6 6.6 0 1 1 0 -6.6M-2 -13L12.5 1.5" fill="none" stroke="#f7f9fb" stroke-width="1" stroke-linejoin="round" stroke-linecap="round"/></g>
<g transform="translate(853.3 849.3) rotate(0)"><path d="M0 -6.6A6.6 6.6 0 1 1 0 6.6A6.6 6.6 0 1 1 0 -6.6M-2 -13L12.5 1.5" fill="none" stroke="#8d8d8d" stroke-width="3.4" stroke-linejoin="round" stroke-linecap="round" /><path d="M0 -6.6A6.6 6.6 0 1 1 0 6.6A6.6 6.6 0 1 1 0 -6.6M-2 -13L12.5 1.5" fill="none" stroke="#f7f9fb" stroke-width="1" stroke-linejoin="round" stroke-linecap="round"/></g>
<g transform="translate(857.0 860.7) rotate(0)"><rect x="-10.8" y="-4.6" width="21.6" height="9.2" rx="2" fill="#f5f7f9" stroke="#8d8d8d" stroke-width="1.4"/><path d="M-9.5 -1.2H9.5" stroke="#8d8d8d" stroke-width="1.3"/><path d="M-9 3.2Q-7.5 0.2 -6 3.2Q-4.5 0.2 -3 3.2Q-1.5 0.2 0 3.2Q1.5 0.2 3 3.2Q4.5 0.2 6 3.2Q7.5 0.2 9 3.2" fill="none" stroke="#8d8d8d" stroke-width="1.1"/></g>
<g transform="translate(1104.5 822.6) rotate(0)"><path d="M0 -6.6A6.6 6.6 0 1 1 0 6.6A6.6 6.6 0 1 1 0 -6.6M-2 -13L12.5 1.5" fill="none" stroke="#8d8d8d" stroke-width="3.4" stroke-linejoin="round" stroke-linecap="round" /><path d="M0 -6.6A6.6 6.6 0 1 1 0 6.6A6.6 6.6 0 1 1 0 -6.6M-2 -13L12.5 1.5" fill="none" stroke="#f7f9fb" stroke-width="1" stroke-linejoin="round" stroke-linecap="round"/></g>
<g transform="translate(1077.9 849.3) rotate(0)"><path d="M0 -6.6A6.6 6.6 0 1 1 0 6.6A6.6 6.6 0 1 1 0 -6.6M-2 -13L12.5 1.5" fill="none" stroke="#8d8d8d" stroke-width="3.4" stroke-linejoin="round" stroke-linecap="round" /><path d="M0 -6.6A6.6 6.6 0 1 1 0 6.6A6.6 6.6 0 1 1 0 -6.6M-2 -13L12.5 1.5" fill="none" stroke="#f7f9fb" stroke-width="1" stroke-linejoin="round" stroke-linecap="round"/></g>
<g transform="translate(1119.7 844.7) rotate(0)"><rect x="-10.8" y="-4.6" width="21.6" height="9.2" rx="2" fill="#f5f7f9" stroke="#8d8d8d" stroke-width="1.4"/><path d="M-9.5 -1.2H9.5" stroke="#8d8d8d" stroke-width="1.3"/><path d="M-9 3.2Q-7.5 0.2 -6 3.2Q-4.5 0.2 -3 3.2Q-1.5 0.2 0 3.2Q1.5 0.2 3 3.2Q4.5 0.2 6 3.2Q7.5 0.2 9 3.2" fill="none" stroke="#8d8d8d" stroke-width="1.1"/></g>
<g transform="translate(1055.0 872.1) rotate(0)"><rect x="-10.8" y="-4.6" width="21.6" height="9.2" rx="2" fill="#f5f7f9" stroke="#8d8d8d" stroke-width="1.4"/><path d="M-9.5 -1.2H9.5" stroke="#8d8d8d" stroke-width="1.3"/><path d="M-9 3.2Q-7.5 0.2 -6 3.2Q-4.5 0.2 -3 3.2Q-1.5 0.2 0 3.2Q1.5 0.2 3 3.2Q4.5 0.2 6 3.2Q7.5 0.2 9 3.2" fill="none" stroke="#8d8d8d" stroke-width="1.1"/></g>
<path d="M753.6 311.3H1121.6V834.90A28.30 28.30 0 0 1 1093.30 863.2H866.70A28.30 28.30 0 0 1 838.4 834.90V434.40A22.64 22.64 0 0 0 827.82 415.24L766.82 376.82A28.30 28.30 0 0 1 753.6 352.88Z" fill="none" stroke="#62b8e4" stroke-width="2.0"/>
<path d="M859.8 347.8H1100.4V588.6H859.8Z" fill="none" stroke="#62b8e4" stroke-width="2.0"/>
<circle cx="892.20" cy="378.00" r="11.6" fill="none" stroke="#62b8e4" stroke-width="2.0"/>
<circle cx="1067.60" cy="378.00" r="11.6" fill="none" stroke="#62b8e4" stroke-width="2.0"/>
<circle cx="892.20" cy="553.30" r="11.6" fill="none" stroke="#62b8e4" stroke-width="2.0"/>
<circle cx="1067.60" cy="553.30" r="11.6" fill="none" stroke="#62b8e4" stroke-width="2.0"/>
<circle cx="980" cy="465.6" r="62.3" fill="none" stroke="#62b8e4" stroke-width="2.0"/>
<circle cx="895.10" cy="622.2" r="14.4" fill="none" stroke="#62b8e4" stroke-width="2.0"/>
<circle cx="895.10" cy="622.2" r="31.3" fill="none" stroke="#62b8e4" stroke-width="2.0"/>
<circle cx="1064.90" cy="622.2" r="14.4" fill="none" stroke="#62b8e4" stroke-width="2.0"/>
<circle cx="1064.90" cy="622.2" r="31.3" fill="none" stroke="#62b8e4" stroke-width="2.0"/>
<circle cx="934.70" cy="698" r="10.8" fill="none" stroke="#62b8e4" stroke-width="2.0"/>
<circle cx="934.70" cy="698" r="20" fill="none" stroke="#62b8e4" stroke-width="2.0"/>
<circle cx="1025.30" cy="698" r="10.8" fill="none" stroke="#62b8e4" stroke-width="2.0"/>
<circle cx="1025.30" cy="698" r="20" fill="none" stroke="#62b8e4" stroke-width="2.0"/>
<path d="M948.30 786.70A31.70 31.70 0 0 1 1011.70 786.70V814.60A31.70 31.70 0 0 1 948.30 814.60Z" fill="none" stroke="#62b8e4" stroke-width="2.0"/>
<path d="M965.30 786.70A14.70 14.70 0 0 1 994.70 786.70V814.60A14.70 14.70 0 0 1 965.30 814.60Z" fill="none" stroke="#62b8e4" stroke-width="2.0"/>
<path d="M838.40 141.00L838.40 206.00" stroke="#1f1f1f" stroke-width="1.00" fill="none" />
<path d="M1121.60 141.00L1121.60 206.00" stroke="#1f1f1f" stroke-width="1.00" fill="none" />
<path d="M838.40 147.00L1121.60 147.00" stroke="#1f1f1f" stroke-width="1.00" fill="none" />
<path d="M838.40 147.00L849.40 144.40L849.40 149.60Z" fill="#111"/>
<path d="M1121.60 147.00L1110.60 149.60L1110.60 144.40Z" fill="#111"/>
<text x="979.60" y="141.30" font-size="15.7" fill="#444" stroke="#f6f9fc" stroke-width="0.4" text-anchor="middle" textLength="36.7" lengthAdjust="spacingAndGlyphs">50.00</text>
<path d="M765.00 212.00L832.00 212.00" stroke="#1f1f1f" stroke-width="1.00" fill="none" />
<path d="M765.00 863.20L832.00 863.20" stroke="#1f1f1f" stroke-width="1.00" fill="none" />
<path d="M771.00 212.00L771.00 863.20" stroke="#1f1f1f" stroke-width="1.00" fill="none" />
<path d="M771.00 212.00L773.60 223.00L768.40 223.00Z" fill="#111"/>
<path d="M771.00 863.20L768.40 852.20L773.60 852.20Z" fill="#111"/>
<text x="0" y="0" transform="translate(776.80 536.00) rotate(90.00)" font-size="15.7" fill="#444" stroke="#f6f9fc" stroke-width="0.4" text-anchor="middle" textLength="43.0" lengthAdjust="spacingAndGlyphs">115.00</text>
<path d="M859.80 297.00L859.80 341.60" stroke="#1f1f1f" stroke-width="1.00" fill="none" />
<path d="M1100.40 297.00L1100.40 341.60" stroke="#1f1f1f" stroke-width="1.00" fill="none" />
<path d="M859.80 302.30L1100.40 302.30" stroke="#1f1f1f" stroke-width="1.00" fill="none" />
<path d="M859.80 302.30L870.80 299.70L870.80 304.90Z" fill="#111"/>
<path d="M1100.40 302.30L1089.40 304.90L1089.40 299.70Z" fill="#111"/>
<text x="979.70" y="298.00" font-size="15.7" fill="#444" stroke="#f6f9fc" stroke-width="0.4" text-anchor="middle" textLength="36.5" lengthAdjust="spacingAndGlyphs">42.50</text>
<path d="M787.00 348.00L853.00 348.00" stroke="#1f1f1f" stroke-width="1.00" fill="none" />
<path d="M787.00 588.60L853.00 588.60" stroke="#1f1f1f" stroke-width="1.00" fill="none" />
<path d="M793.00 348.00L793.00 588.60" stroke="#1f1f1f" stroke-width="1.00" fill="none" />
<path d="M793.00 348.00L795.60 359.00L790.40 359.00Z" fill="#111"/>
<path d="M793.00 588.60L790.40 577.60L795.60 577.60Z" fill="#111"/>
<text x="0" y="0" transform="translate(799.00 466.00) rotate(90.00)" font-size="15.7" fill="#444" stroke="#f6f9fc" stroke-width="0.4" text-anchor="middle" textLength="37.0" lengthAdjust="spacingAndGlyphs">42.50</text>
<path d="M815.00 378.00L886.00 378.00" stroke="#1f1f1f" stroke-width="1.00" fill="none" />
<path d="M814.00 553.30L886.00 553.30" stroke="#1f1f1f" stroke-width="1.00" fill="none" />
<path d="M820.80 378.00L820.80 553.30" stroke="#1f1f1f" stroke-width="1.00" fill="none" />
<path d="M820.80 378.00L823.40 389.00L818.20 389.00Z" fill="#111"/>
<path d="M820.80 553.30L818.20 542.30L823.40 542.30Z" fill="#111"/>
<text x="0" y="0" transform="translate(826.00 462.50) rotate(90.00)" font-size="15.7" fill="#444" stroke="#f6f9fc" stroke-width="0.4" text-anchor="middle" textLength="37.0" lengthAdjust="spacingAndGlyphs">31.00</text>
<path d="M892.20 384.00L892.20 421.00" stroke="#1f1f1f" stroke-width="1.00" fill="none" />
<path d="M1067.60 384.00L1067.60 421.00" stroke="#1f1f1f" stroke-width="1.00" fill="none" />
<path d="M892.20 415.80L1067.60 415.80" stroke="#1f1f1f" stroke-width="1.00" fill="none" />
<path d="M892.20 415.80L903.20 413.20L903.20 418.40Z" fill="#111"/>
<path d="M1067.60 415.80L1056.60 418.40L1056.60 413.20Z" fill="#111"/>
<text x="994.50" y="410.00" font-size="15.7" fill="#444" stroke="#f6f9fc" stroke-width="0.4" text-anchor="middle" textLength="37.0" lengthAdjust="spacingAndGlyphs">31.00</text>
<path d="M1074.00 378.00L1151.50 378.00" stroke="#1f1f1f" stroke-width="1.00" fill="none" />
<path d="M1074.00 553.30L1151.50 553.30" stroke="#1f1f1f" stroke-width="1.00" fill="none" />
<path d="M1145.80 378.00L1145.80 553.30" stroke="#1f1f1f" stroke-width="1.00" fill="none" />
<path d="M1145.80 378.00L1148.40 389.00L1143.20 389.00Z" fill="#111"/>
<path d="M1145.80 553.30L1143.20 542.30L1148.40 542.30Z" fill="#111"/>
<text x="0" y="0" transform="translate(1141.50 474.00) rotate(-90.00)" font-size="15.7" fill="#444" stroke="#f6f9fc" stroke-width="0.4" text-anchor="middle" textLength="36.0" lengthAdjust="spacingAndGlyphs">31.00</text>
<path d="M917.70 466.00L1042.30 466.00" stroke="#1f1f1f" stroke-width="1.00" fill="none" />
<path d="M917.70 466.00L928.70 463.40L928.70 468.60Z" fill="#111"/>
<path d="M1042.30 466.00L1031.30 468.60L1031.30 463.40Z" fill="#111"/>
<text x="1011.00" y="460.00" font-size="15.7" fill="#444" stroke="#f6f9fc" stroke-width="0.4" text-anchor="middle" textLength="48.0" lengthAdjust="spacingAndGlyphs">Ø22.00</text>
<path d="M980.00 496.10L1121.60 496.10" stroke="#1f1f1f" stroke-width="1.00" fill="none" />
<path d="M980.00 496.10L991.00 493.50L991.00 498.70Z" fill="#111"/>
<path d="M1121.60 496.10L1110.60 498.70L1110.60 493.50Z" fill="#111"/>
<text x="1046.50" y="487.00" font-size="15.7" fill="#444" stroke="#f6f9fc" stroke-width="0.4" text-anchor="middle" textLength="47.0" lengthAdjust="spacingAndGlyphs">(25.00)</text>
<text x="805.80" y="331.00" font-size="15.7" fill="#444" stroke="#f6f9fc" stroke-width="0.4" text-anchor="start" textLength="39.5" lengthAdjust="spacingAndGlyphs">Ø4.00</text>
<path d="M808.00 336.70L845.00 336.70" stroke="#1f1f1f" stroke-width="1.00" fill="none" />
<path d="M845.00 336.70L892.20 378.00" stroke="#1f1f1f" stroke-width="1.00" fill="none" />
<path d="M889.80 375.90L881.33 371.91L884.76 368.00Z" fill="#111"/>
<path d="M894.60 380.10L903.07 384.09L899.64 388.00Z" fill="#111"/>
<text x="917.50" y="327.00" font-size="15.7" fill="#444" stroke="#f6f9fc" stroke-width="0.4" text-anchor="start" textLength="39.0" lengthAdjust="spacingAndGlyphs">R4.00</text>
<path d="M917.00 331.30L955.00 331.30" stroke="#1f1f1f" stroke-width="1.00" fill="none" />
<path d="M917.00 331.30L832.00 418.00" stroke="#1f1f1f" stroke-width="1.00" fill="none" />
<path d="M832.00 418.00L837.84 408.32L841.56 411.96Z" fill="#111"/>
<text x="705.80" y="367.00" font-size="15.7" fill="#444" stroke="#f6f9fc" stroke-width="0.4" text-anchor="start" textLength="39.0" lengthAdjust="spacingAndGlyphs">R5.00</text>
<path d="M707.00 372.50L745.00 372.50" stroke="#1f1f1f" stroke-width="1.00" fill="none" />
<path d="M745.00 372.50L756.00 366.00" stroke="#1f1f1f" stroke-width="1.00" fill="none" />
<path d="M756.00 366.50L749.11 372.85L746.79 368.20Z" fill="#111"/>
<text x="1133.70" y="337.00" font-size="15.7" fill="#444" stroke="#f6f9fc" stroke-width="0.4" text-anchor="start" textLength="39.5" lengthAdjust="spacingAndGlyphs">Ø4.00</text>
<path d="M1133.00 342.30L1171.00 342.30" stroke="#1f1f1f" stroke-width="1.00" fill="none" />
<path d="M1133.00 342.30L1067.60 378.00" stroke="#1f1f1f" stroke-width="1.00" fill="none" />
<path d="M1070.40 376.50L1077.03 369.88L1079.54 374.44Z" fill="#111"/>
<path d="M1064.80 379.50L1058.17 386.12L1055.66 381.56Z" fill="#111"/>
<text x="838.00" y="576.00" font-size="15.7" fill="#444" stroke="#f6f9fc" stroke-width="0.4" text-anchor="start" textLength="39.5" lengthAdjust="spacingAndGlyphs">Ø4.00</text>
<path d="M840.00 582.00L876.00 582.00" stroke="#1f1f1f" stroke-width="1.00" fill="none" />
<path d="M876.00 582.00L892.30 553.30" stroke="#1f1f1f" stroke-width="1.00" fill="none" />
<path d="M890.90 556.00L888.77 565.12L884.23 562.58Z" fill="#111"/>
<path d="M893.70 550.60L895.83 541.48L900.37 544.02Z" fill="#111"/>
<text x="1083.00" y="577.00" font-size="15.7" fill="#444" stroke="#f6f9fc" stroke-width="0.4" text-anchor="start" textLength="39.5" lengthAdjust="spacingAndGlyphs">Ø4.00</text>
<path d="M1083.00 583.60L1120.00 583.60" stroke="#1f1f1f" stroke-width="1.00" fill="none" />
<path d="M1083.00 583.60L1067.60 553.30" stroke="#1f1f1f" stroke-width="1.00" fill="none" />
<path d="M1069.10 556.20L1075.45 563.09L1070.80 565.41Z" fill="#111"/>
<path d="M1066.10 550.50L1059.75 543.61L1064.40 541.29Z" fill="#111"/>
<text x="1135.00" y="585.00" font-size="15.7" fill="#444" stroke="#f6f9fc" stroke-width="0.4" text-anchor="start" textLength="39.5" lengthAdjust="spacingAndGlyphs">Ø5.00</text>
<path d="M1135.00 591.90L1172.00 591.90" stroke="#1f1f1f" stroke-width="1.00" fill="none" />
<path d="M1135.00 591.90L1052.00 627.50" stroke="#1f1f1f" stroke-width="1.00" fill="none" />
<path d="M1068.60 620.60L1076.76 614.26L1078.81 619.04Z" fill="#111"/>
<path d="M1061.20 623.80L1053.04 630.14L1050.99 625.36Z" fill="#111"/>
<path d="M838.40 622.20L895.10 622.20" stroke="#1f1f1f" stroke-width="1.00" fill="none" />
<path d="M838.40 622.20L849.40 619.60L849.40 624.80Z" fill="#111"/>
<path d="M895.10 622.20L884.10 624.80L884.10 619.60Z" fill="#111"/>
<text x="866.00" y="617.00" font-size="15.7" fill="#444" stroke="#f6f9fc" stroke-width="0.4" text-anchor="middle" textLength="36.0" lengthAdjust="spacingAndGlyphs">10.00</text>
<path d="M1064.90 622.20L1121.60 622.20" stroke="#1f1f1f" stroke-width="1.00" fill="none" />
<path d="M1064.90 622.20L1075.90 619.60L1075.90 624.80Z" fill="#111"/>
<path d="M1121.60 622.20L1110.60 624.80L1110.60 619.60Z" fill="#111"/>
<text x="1099.50" y="617.00" font-size="15.7" fill="#444" stroke="#f6f9fc" stroke-width="0.4" text-anchor="middle" textLength="36.0" lengthAdjust="spacingAndGlyphs">10.00</text>
<path d="M970.00 599.00L909.00 618.00" stroke="#1f1f1f" stroke-width="1.00" fill="none" />
<path d="M912.00 617.30L921.74 611.56L923.28 616.53Z" fill="#111"/>
<text x="0" y="0" transform="translate(952.00 598.00) rotate(-17.00)" font-size="15.7" fill="#444" stroke="#f6f9fc" stroke-width="0.4" text-anchor="middle" textLength="28.0" lengthAdjust="spacingAndGlyphs">3.00</text>
<text x="940.00" y="633.00" font-size="15.7" fill="#444" stroke="#f6f9fc" stroke-width="0.4" text-anchor="start" textLength="39.5" lengthAdjust="spacingAndGlyphs">Ø5.00</text>
<path d="M940.00 639.60L975.00 639.60" stroke="#1f1f1f" stroke-width="1.00" fill="none" />
<path d="M940.00 639.60L895.10 622.20" stroke="#1f1f1f" stroke-width="1.00" fill="none" />
<path d="M898.80 623.60L909.06 624.81L907.17 629.66Z" fill="#111"/>
<path d="M891.40 620.80L881.14 619.59L883.03 614.74Z" fill="#111"/>
<path d="M1065.30 636.60L1065.30 688.00" stroke="#1f1f1f" stroke-width="1.00" fill="none" />
<path d="M1065.30 653.50L1062.70 642.50L1067.90 642.50Z" fill="#111"/>
<text x="0" y="0" transform="translate(1071.00 670.00) rotate(90.00)" font-size="15.7" fill="#444" stroke="#f6f9fc" stroke-width="0.4" text-anchor="middle" textLength="28.0" lengthAdjust="spacingAndGlyphs">3.00</text>
<path d="M866.40 622.20L866.40 863.20" stroke="#1f1f1f" stroke-width="1.00" fill="none" />
<path d="M866.40 863.20L863.80 852.20L869.00 852.20Z" fill="#111"/>
<path d="M866.40 622.20L869.00 633.20L863.80 633.20Z" fill="#111"/>
<text x="0" y="0" transform="translate(861.00 738.00) rotate(-90.00)" font-size="15.7" fill="#444" stroke="#f6f9fc" stroke-width="0.4" text-anchor="middle" textLength="36.0" lengthAdjust="spacingAndGlyphs">42.50</text>
<path d="M904.60 628.00L904.60 800.70" stroke="#1f1f1f" stroke-width="1.00" fill="none" />
<path d="M904.60 800.70L902.00 789.70L907.20 789.70Z" fill="#111"/>
<path d="M904.60 628.00L907.20 639.00L902.00 639.00Z" fill="#111"/>
<path d="M899.00 800.70L940.00 800.70" stroke="#1f1f1f" stroke-width="1.00" fill="none" />
<text x="0" y="0" transform="translate(899.00 718.50) rotate(-90.00)" font-size="15.7" fill="#444" stroke="#f6f9fc" stroke-width="0.4" text-anchor="middle" textLength="36.5" lengthAdjust="spacingAndGlyphs">31.50</text>
<path d="M1106.60 622.20L1106.60 863.20" stroke="#1f1f1f" stroke-width="1.00" fill="none" />
<path d="M1106.60 622.20L1109.20 633.20L1104.00 633.20Z" fill="#111"/>
<path d="M1106.60 863.20L1104.00 852.20L1109.20 852.20Z" fill="#111"/>
<path d="M1098.00 863.20L1112.00 863.20" stroke="#1f1f1f" stroke-width="1.00" fill="none" />
<text x="0" y="0" transform="translate(1102.00 730.00) rotate(-90.00)" font-size="15.7" fill="#444" stroke="#f6f9fc" stroke-width="0.4" text-anchor="middle" textLength="36.0" lengthAdjust="spacingAndGlyphs">42.50</text>
<text x="963.00" y="666.00" font-size="15.7" fill="#444" stroke="#f6f9fc" stroke-width="0.4" text-anchor="start" textLength="39.5" lengthAdjust="spacingAndGlyphs">Ø7.00</text>
<path d="M962.50 673.40L1000.00 673.40" stroke="#1f1f1f" stroke-width="1.00" fill="none" />
<path d="M962.50 673.40L921.00 710.50" stroke="#1f1f1f" stroke-width="1.00" fill="none" />
<path d="M949.50 684.60L943.06 693.89L939.58 690.03Z" fill="#111"/>
<path d="M919.80 711.40L926.24 702.11L929.72 705.97Z" fill="#111"/>
<text x="961.00" y="714.00" font-size="15.7" fill="#444" stroke="#f6f9fc" stroke-width="0.4" text-anchor="start" textLength="40.0" lengthAdjust="spacingAndGlyphs">Ø7.00</text>
<path d="M963.00 720.30L1001.00 720.30" stroke="#1f1f1f" stroke-width="1.00" fill="none" />
<path d="M1001.00 720.30L1040.00 685.00" stroke="#1f1f1f" stroke-width="1.00" fill="none" />
<path d="M1010.50 711.50L1016.94 702.21L1020.42 706.07Z" fill="#111"/>
<path d="M1040.00 685.20L1033.56 694.49L1030.08 690.63Z" fill="#111"/>
<path d="M931.50 698.00L924.50 700.30L924.50 695.70Z" fill="#111"/>
<path d="M938.00 698.00L945.00 695.70L945.00 700.30Z" fill="#111"/>
<path d="M1022.00 698.00L1015.00 700.30L1015.00 695.70Z" fill="#111"/>
<path d="M1028.60 698.00L1035.60 695.70L1035.60 700.30Z" fill="#111"/>
<path d="M934.70 703.00L934.70 745.00" stroke="#1f1f1f" stroke-width="1.00" fill="none" />
<path d="M934.70 739.20L980.00 739.20" stroke="#1f1f1f" stroke-width="1.00" fill="none" />
<path d="M934.70 739.20L945.70 736.60L945.70 741.80Z" fill="#111"/>
<path d="M980.00 739.20L969.00 741.80L969.00 736.60Z" fill="#111"/>
<text x="960.00" y="733.00" font-size="15.7" fill="#444" stroke="#f6f9fc" stroke-width="0.4" text-anchor="middle" textLength="28.0" lengthAdjust="spacingAndGlyphs">8.00</text>
<path d="M1030.00 726.70L995.00 768.00" stroke="#1f1f1f" stroke-width="1.00" fill="none" />
<path d="M996.50 766.50L1001.64 756.43L1005.61 759.80Z" fill="#111"/>
<text x="0" y="0" transform="translate(1014.50 737.50) rotate(-50.00)" font-size="15.7" fill="#444" stroke="#f6f9fc" stroke-width="0.4" text-anchor="middle" textLength="28.0" lengthAdjust="spacingAndGlyphs">3.00</text>
<text x="898.00" y="758.00" font-size="15.7" fill="#444" stroke="#f6f9fc" stroke-width="0.4" text-anchor="start" textLength="39.5" lengthAdjust="spacingAndGlyphs">Ø5.00</text>
<path d="M900.00 764.30L937.00 764.30" stroke="#1f1f1f" stroke-width="1.00" fill="none" />
<path d="M937.00 764.30L980.00 786.70" stroke="#1f1f1f" stroke-width="1.00" fill="none" />
<path d="M976.00 784.60L965.04 781.83L967.44 777.22Z" fill="#111"/>
<text x="898.00" y="786.00" font-size="15.7" fill="#444" stroke="#f6f9fc" stroke-width="0.4" text-anchor="start" textLength="40.0" lengthAdjust="spacingAndGlyphs">Ø5.00</text>
<path d="M900.00 792.30L937.00 792.30" stroke="#1f1f1f" stroke-width="1.00" fill="none" />
<path d="M937.00 792.30L980.00 814.60" stroke="#1f1f1f" stroke-width="1.00" fill="none" />
<path d="M976.00 812.50L965.04 809.73L967.44 805.12Z" fill="#111"/>
<path d="M1000.00 786.70L1047.00 786.70" stroke="#1f1f1f" stroke-width="1.00" fill="none" />
<path d="M995.00 814.60L1047.00 814.60" stroke="#1f1f1f" stroke-width="1.00" fill="none" />
<path d="M1041.30 786.70L1041.30 814.60" stroke="#1f1f1f" stroke-width="1.00" fill="none" />
<path d="M1041.30 786.70L1043.90 796.70L1038.70 796.70Z" fill="#111"/>
<path d="M1041.30 814.60L1038.70 804.60L1043.90 804.60Z" fill="#111"/>
<text x="0" y="0" transform="translate(1035.50 800.70) rotate(-90.00)" font-size="15.7" fill="#444" stroke="#f6f9fc" stroke-width="0.4" text-anchor="middle" textLength="28.0" lengthAdjust="spacingAndGlyphs">5.00</text>
<path d="M980.00 814.60L1046.00 857.50" stroke="#1f1f1f" stroke-width="1.00" fill="none" />
<path d="M1006.00 831.50L995.37 827.65L998.22 823.30Z" fill="#111"/>
<text x="0" y="0" transform="translate(1034.00 842.50) rotate(33.00)" font-size="15.7" fill="#444" stroke="#f6f9fc" stroke-width="0.4" text-anchor="middle" textLength="28.0" lengthAdjust="spacingAndGlyphs">3.00</text>
<path d="M866.90 834.50L847.00 855.00" stroke="#1f1f1f" stroke-width="1.00" fill="none" />
<path d="M847.00 855.00L852.80 845.30L856.53 848.93Z" fill="#111"/>
<text x="0" y="0" transform="translate(852.50 840.50) rotate(-45.00)" font-size="15.7" fill="#444" stroke="#f6f9fc" stroke-width="0.4" text-anchor="middle" textLength="40.0" lengthAdjust="spacingAndGlyphs">R5.00</text>
<circle cx="980" cy="537.5" r="7.4" fill="none" stroke="#b0b0b0" stroke-opacity="0.85" stroke-width="4"/>
<circle cx="980.00" cy="537.50" r="3.6" fill="#333" stroke="#777" stroke-width="0.6"/>
<circle cx="892.20" cy="378.00" r="3.2" fill="#333" stroke="#777" stroke-width="0.6"/>
<circle cx="1067.60" cy="378.00" r="3.2" fill="#333" stroke="#777" stroke-width="0.6"/>
<circle cx="892.20" cy="553.30" r="3.2" fill="#333" stroke="#777" stroke-width="0.6"/>
<circle cx="1067.60" cy="553.30" r="3.2" fill="#333" stroke="#777" stroke-width="0.6"/>
<circle cx="980.00" cy="465.60" r="3.2" fill="#333" stroke="#777" stroke-width="0.6"/>
<circle cx="980.00" cy="786.70" r="3.2" fill="#333" stroke="#777" stroke-width="0.6"/>
<circle cx="980.00" cy="814.60" r="3.2" fill="#333" stroke="#777" stroke-width="0.6"/>
<circle cx="1121.60" cy="212.00" r="3.2" fill="#333" stroke="#777" stroke-width="0.6"/>
<circle cx="838.40" cy="863.20" r="3.2" fill="#333" stroke="#777" stroke-width="0.6"/>
<circle cx="895.10" cy="622.20" r="3.8" fill="#fff" stroke="#777" stroke-width="1"/>
<circle cx="1064.90" cy="622.20" r="3.8" fill="#fff" stroke="#777" stroke-width="1"/>
<circle cx="934.70" cy="698.00" r="3.8" fill="#fff" stroke="#777" stroke-width="1"/>
<circle cx="1025.30" cy="698.00" r="3.8" fill="#fff" stroke="#777" stroke-width="1"/>
<circle cx="781.50" cy="352.50" r="3.5" fill="#fff" stroke="#999" stroke-width="1"/>
<circle cx="815.80" cy="436.50" r="3.5" fill="#fff" stroke="#999" stroke-width="1"/>
<circle cx="866.90" cy="834.50" r="3.5" fill="#fff" stroke="#999" stroke-width="1"/>
<circle cx="948.30" cy="786.70" r="3.5" fill="#fff" stroke="#999" stroke-width="1"/>
<circle cx="1011.70" cy="786.70" r="3.5" fill="#fff" stroke="#999" stroke-width="1"/>
<circle cx="1092.50" cy="833.50" r="3.5" fill="#fff" stroke="#999" stroke-width="1"/>
<g fill="none" stroke="#555" stroke-width="1"><circle cx="923.3" cy="212.3" r="4"/><circle cx="923.3" cy="217.3" r="4"/><circle cx="980" cy="241.5" r="4"/></g>
<circle cx="940.00" cy="800.70" r="3.8" fill="#fff" stroke="#d8b090" stroke-width="1"/>
<circle cx="1019.00" cy="800.70" r="3.8" fill="#fff" stroke="#d8b090" stroke-width="1"/>
</svg>
<svg class="abs" style="left:0;top:118px" width="320" height="180" viewBox="0 118 320 180">
<defs>

<g id="folder"><path d="M0 0.8Q0 0 0.8 0H5.5L7 1.8H15.2Q16 1.8 16 2.6V11.7Q16 12.5 15.2 12.5H0.8Q0 12.5 0 11.7Z" fill="#989898"/><path d="M0.3 2.6H6.2L7.3 1.8" stroke="#efefef" stroke-width="0.9" fill="none"/></g>
<g id="eye"><path d="M0 5Q8 -3.5 16 5Q8 13.5 0 5Z" fill="#9b9b9b"/><circle cx="8" cy="5" r="2.6" fill="none" stroke="#efefef" stroke-width="1.2"/></g>
<g id="triO"><path d="M0.8 0.8L8.2 6.2L0.8 11.8Z" fill="#dedfe3" stroke="#222" stroke-width="1.5" stroke-linejoin="round"/></g>
<g id="triF"><path d="M0.8 10.6L10.2 0.8V10.6Z" fill="#ababab" stroke="#222" stroke-width="1.3" stroke-linejoin="round"/></g>
</defs>
<rect x="4.5" y="122.5" width="299" height="23.5" fill="#f0f0f0" stroke="#c6c6c6" stroke-width="1"/>
<path d="M9 134.8L14 131.8V137.8Z M14.3 134.8L19.3 131.8V137.8Z" fill="#333"/>
<text x="29" y="138" font-size="11" fill="#555" textLength="84" lengthAdjust="spacingAndGlyphs">PRZEGLĄDARKA</text>
<circle cx="287.5" cy="134.5" r="5.3" fill="#1e1e1e"/><rect x="284.3" y="133.7" width="6.4" height="1.7" fill="#fff"/>
<!-- rows -->
<rect x="40" y="152.2" width="168" height="19.1" fill="#efefef"/>
<rect x="58" y="176" width="150" height="19.8" fill="#efefef"/>
<rect x="58" y="200" width="126" height="19.8" fill="#efefef"/>
<rect x="58" y="224" width="111" height="19.8" fill="#efefef"/>
<rect x="58" y="248.2" width="99" height="19.8" fill="#efefef"/>
<rect x="76.2" y="272.1" width="99" height="19.8" fill="#efefef"/>
<use href="#triF" x="20.8" y="156.3"/>
<use href="#eye" x="43" y="157"/>
<rect x="65" y="154.2" width="117.8" height="15.5" fill="#959595"/>
<g transform="translate(68,154.5)">
<path d="M1 4L4 1H14.5V11.5L11.5 14.5H1Z" fill="#e6e6ea" stroke="#222" stroke-width="1.1" stroke-linejoin="round"/>
<path d="M1 4H11.5V14.5M11.5 4L14.5 1" fill="none" stroke="#222" stroke-width="1"/>
<path d="M11.8 4.3L14.2 1.8V11.2L11.8 13.8Z" fill="#b4b4b8"/>
</g>
<text x="98.3" y="167" font-size="12.2" font-weight="bold" fill="#fff" textLength="75.9" lengthAdjust="spacingAndGlyphs">laser_plate v5</text>
<circle cx="193.3" cy="162.7" r="5.8" fill="#fff" stroke="#222" stroke-width="1.4"/><circle cx="193.3" cy="162.7" r="2.4" fill="#222"/>
<use href="#triO" x="40.2" y="180"/>
<g transform="translate(67.5,186)" fill="#8e8e8e">
<circle r="4.6"/>
<path d="M-1.4 -6.6H1.4V6.6H-1.4Z"/><path d="M-1.4 -6.6H1.4V6.6H-1.4Z" transform="rotate(45)"/><path d="M-1.4 -6.6H1.4V6.6H-1.4Z" transform="rotate(90)"/><path d="M-1.4 -6.6H1.4V6.6H-1.4Z" transform="rotate(135)"/>
<circle r="2" fill="#efefef"/>
</g>
<text x="87.5" y="190.2" font-size="11.8" fill="#333" textLength="108.3" lengthAdjust="spacingAndGlyphs">Ustawienia dokumentu</text>
<use href="#triO" x="40.2" y="204"/>
<use href="#folder" x="61" y="203.7"/>
<text x="91" y="214.2" font-size="11.8" fill="#333" textLength="81" lengthAdjust="spacingAndGlyphs">Nazwane widoki</text>
<use href="#triO" x="40.2" y="228"/>
<g fill="none" stroke="#a3a3a3" stroke-width="1"><path d="M61.2 234Q69 226 76.8 234Q69 242 61.2 234Z"/><circle cx="69" cy="234" r="2.7"/><path d="M63 227.5L75 240.5"/></g>
<use href="#folder" x="86.2" y="227.7"/>
<text x="116" y="238.2" font-size="11.8" fill="#333" textLength="44" lengthAdjust="spacingAndGlyphs">Początek</text>
<use href="#triF" x="38.9" y="252.6"/>
<use href="#eye" x="61" y="253"/>
<use href="#folder" x="86.2" y="251.7"/>
<text x="116" y="262.2" font-size="11.8" fill="#333" textLength="32" lengthAdjust="spacingAndGlyphs">Szkice</text>
<use href="#eye" x="79" y="277"/>
<g>
<path d="M105 275.5H117.8V282M105 275.5V287.5H112" fill="none" stroke="#555" stroke-width="1.1"/>
<rect x="104" y="274.5" width="2.2" height="2.2" fill="#1a8cd8"/><rect x="116.7" y="274.5" width="2.2" height="2.2" fill="#1a8cd8"/><rect x="104" y="286.5" width="2.2" height="2.2" fill="#1a8cd8"/>
<path d="M113 289L114 286L118.5 281.5L120.5 283.5L116 288Z" fill="#f0b43c"/><path d="M118.5 281.5L119.5 280.5L121.5 282.5L120.5 283.5Z" fill="#e03030"/><path d="M113 289L114 286L116 288Z" fill="#555"/>
</g>
<text x="134" y="286.2" font-size="11.8" fill="#333" textLength="31" lengthAdjust="spacingAndGlyphs">Szkic1</text>
</svg>
</body></html>
